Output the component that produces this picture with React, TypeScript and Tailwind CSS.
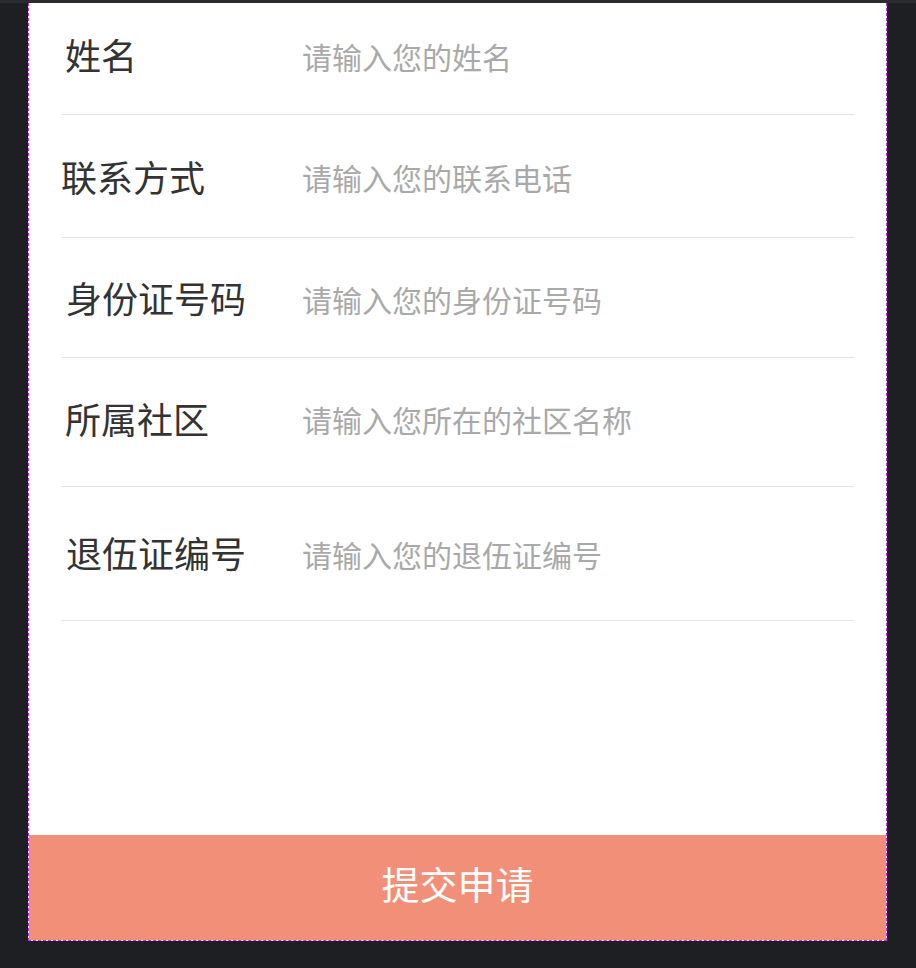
const fields = [
  { label: '姓名', placeholder: '请输入您的姓名', h: 'h-[112px] pb-[6px]', shift: 'ml-[4px]' },
  { label: '联系方式', placeholder: '请输入您的联系电话', h: 'h-[123px] pt-[2px]', shift: 'ml-0' },
  { label: '身份证号码', placeholder: '请输入您的身份证号码', h: 'h-[120px] pt-[2px]', shift: 'ml-[5px]' },
  { label: '所属社区', placeholder: '请输入您所在的社区名称', h: 'h-[129px] pb-[6px]', shift: 'ml-[4px]' },
  { label: '退伍证编号', placeholder: '请输入您的退伍证编号', h: 'h-[134px]', shift: 'ml-[5px]' },
];

export default function App() {
  return (
    <div
      className="min-h-screen bg-[#1e1f23]"
      style={{ fontFamily: '"Noto Sans CJK SC", "Noto Sans", sans-serif' }}
    >
      <div className="h-[3px] bg-[#2a2b2e]" />
      <div className="ml-[28px] w-[859px] h-[938px] flex flex-col bg-white border-l border-r border-b border-dashed border-[#d81ff5]">
        <form className="flex-1 px-[32px]">
          {fields.map((f) => (
            <div key={f.label} className={`${f.h} flex items-center border-b border-[#e4e4e4]`}>
              <div className="w-[241px] shrink-0">
                <span className={`${f.shift} text-[36px] leading-none text-[#333333]`}>{f.label}</span>
              </div>
              <input
                type="text"
                placeholder={f.placeholder}
                className="flex-1 min-w-0 text-[30px] leading-none text-[#333333] placeholder:text-[#a9a9a9] outline-none bg-transparent"
              />
            </div>
          ))}
        </form>
        <button
          type="button"
          className="h-[105px] w-full pb-[10px] bg-[#f28f78] text-white text-[38px] leading-none flex items-center justify-center"
        >
          提交申请
        </button>
      </div>
    </div>
  );
}
